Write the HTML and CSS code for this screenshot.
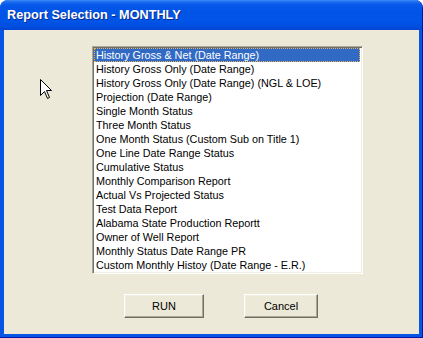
FILE: index.html
```html
<!DOCTYPE html>
<html>
<head>
<meta charset="utf-8">
<link rel="stylesheet" href="styles.css">
</head>
<body>
<div class="window">
  <div class="titlebar"><span class="title">Report Selection - MONTHLY</span></div>
  <div class="client">
    <div class="listbox">
      <div class="item selected">History Gross &amp; Net (Date Range)</div>
      <div class="item">History Gross Only (Date Range)</div>
      <div class="item">History Gross Only (Date Range) (NGL &amp; LOE)</div>
      <div class="item">Projection (Date Range)</div>
      <div class="item">Single Month Status</div>
      <div class="item">Three Month Status</div>
      <div class="item">One Month Status (Custom Sub on Title 1)</div>
      <div class="item">One Line Date Range Status</div>
      <div class="item">Cumulative Status</div>
      <div class="item">Monthly Comparison Report</div>
      <div class="item">Actual Vs Projected Status</div>
      <div class="item">Test Data Report</div>
      <div class="item">Alabama State Production Reportt</div>
      <div class="item">Owner of Well Report</div>
      <div class="item">Monthly Status Date Range PR</div>
      <div class="item">Custom Monthly Histoy (Date Range - E.R.)</div>
    </div>
    <div class="buttons">
      <button class="btn run">RUN</button>
      <button class="btn cancel">Cancel</button>
    </div>
  </div>
  <svg class="cursor" width="13" height="21" viewBox="0 0 13 21">
    <path d="M0.5 0.5 L0.5 16.5 L4.5 12.5 L7.5 19.5 L9.5 18.5 L6.5 11.5 L11.5 11.5 Z" fill="#fff" stroke="#000" stroke-width="1"/>
  </svg>
</div>
</body>
</html>
```
FILE: styles.css
```css
html, body {
  margin: 0;
  padding: 0;
  background: #ffffff;
}
.window {
  position: relative;
  width: 423px;
  height: 338px;
  box-sizing: border-box;
  background: #0a54e4;
  border-radius: 8px 8px 0 0;
  overflow: hidden;
  display: flex;
  flex-direction: column;
  border-right: 1px solid #0019a8;
  border-bottom: 1px solid #0019a8;
}
.titlebar {
  height: 30px;
  flex: none;
  display: flex;
  align-items: center;
  padding-left: 7px;
  background: linear-gradient(to bottom, #3d8cf6 0px, #1a6cf0 2px, #0658ea 5px, #0054e6 12px, #0055e8 20px, #004fe0 26px, #0244d4 30px);
}
.title {
  font-family: "Liberation Sans", Arial, sans-serif;
  font-weight: bold;
  font-size: 12.7px;
  color: #ffffff;
  text-shadow: 1px 1px 0 #0a2a8c;
}
.client {
  flex: 1;
  margin: 0 3px 3px 4px;
  background: #ece9d8;
  display: flex;
  flex-direction: column;
  padding-top: 16px;
}
.listbox {
  margin-left: 88px;
  width: 271px;
  height: 228px;
  box-sizing: border-box;
  background: #ffffff;
  border: 1px solid;
  border-color: #aca899 #ffffff #ffffff #aca899;
  box-shadow: inset 1px 1px 0 #716f64, inset -1px -1px 0 #f1efe2;
  padding: 1px 2px 1px 1px;
}
.item {
  height: 14px;
  line-height: 14px;
  font-family: "Liberation Sans", Arial, sans-serif;
  font-size: 10.8px;
  color: #000;
  padding-left: 2px;
  white-space: nowrap;
  overflow: hidden;
  box-sizing: border-box;
}
.item.selected {
  background: #316ac5;
  color: #ffffff;
  border: 1px dotted #e9b25a;
  line-height: 12px;
  padding-left: 1px;
}
.buttons {
  display: flex;
  gap: 40px;
  margin-top: 20px;
  margin-left: 120px;
}
.btn {
  height: 24px;
  box-sizing: border-box;
  background: #ece9d8;
  border: 1px solid;
  border-color: #ffffff #716f64 #716f64 #ffffff;
  box-shadow: inset -1px -1px 0 #aca899, inset 1px 1px 0 #f1efe2;
  font-family: "Liberation Sans", Arial, sans-serif;
  font-size: 11px;
  color: #000;
  padding: 0;
}
.btn.run { width: 80px; }
.btn.cancel { width: 74px; }
.cursor {
  position: absolute;
  left: 40px;
  top: 79px;
}
```
